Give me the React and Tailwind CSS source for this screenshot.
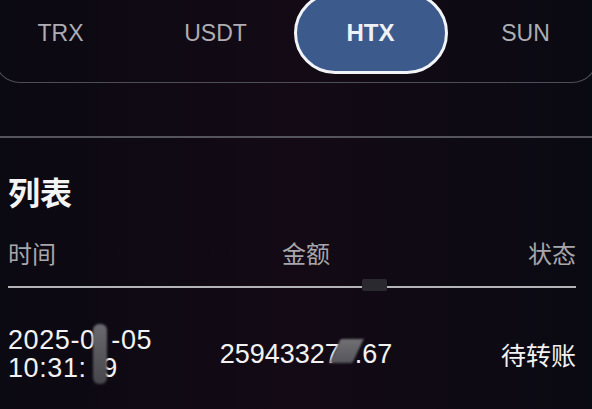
import React from "react";

const tabs = ["TRX", "USDT", "HTX", "SUN"];

const Hidden = ({ ch, className }) => (
  <span className="relative inline-block">
    <span className="text-transparent">{ch}</span>
    <span className={"absolute blur-[1px] " + className} />
  </span>
);

const App = () => {
  return (
    <div
      className="w-[592px] h-[409px] overflow-hidden bg-gradient-to-r from-[#0b0912] via-[#130a15] to-[#0a0a13] text-white"
      style={{ fontFamily: '"Liberation Sans", "Noto Sans CJK SC", sans-serif' }}
    >
      {/* tab card */}
      <div className="ml-[-6px] w-[604px] h-[103px] mt-[-20px] border border-t-0 border-[#4f4d57] rounded-b-[26px] flex items-center pt-[4px]">
        <div className="ml-[-12px] flex items-center">
          {tabs.map((t) => (
            <div key={t} className="w-[155px] flex justify-center shrink-0">
              {t === "HTX" ? (
                <div className="w-[154px] h-[82px] rounded-full bg-[#3c5a8b] border-[3px] border-[#f2f4f7] flex items-center justify-center text-[24px] font-bold text-[#eef2f7]">
                  {t}
                </div>
              ) : (
                <span className="text-[23px] text-[#aeadb3]">{t}</span>
              )}
            </div>
          ))}
        </div>
      </div>

      <div className="mt-[53px] h-[2px] bg-[#55535c]" />

      <div className="pl-[8px] pr-[16px]">
        <div className="mt-[37px] text-[32px] leading-none font-semibold text-[#f4f4f4]" style={{ fontFamily: '"Noto Sans CJK SC", sans-serif' }}>
          列表
        </div>

        <div
          className="mt-[34px] grid grid-cols-[178px_1fr_150px] text-[24px] leading-none text-[#a7a6aa]"
          style={{ fontFamily: '"Noto Sans CJK SC", sans-serif' }}
        >
          <span>时间</span>
          <span className="text-center">金额</span>
          <span className="text-right">状态</span>
        </div>

        <div className="relative mt-[21px] h-[2px] bg-[#b4b3b8]">
          <span className="absolute left-[354px] top-[-7px] w-[25px] h-[12px] bg-[#2a2930] rounded-[2px] blur-[0.5px]" />
        </div>

        <div className="mt-[38px] grid grid-cols-[178px_1fr_150px] items-center text-[27px] leading-[28px] text-[#f2f2f2]">
          <div className="tracking-[0.6px]">
            <div>
              2025-0
              <Hidden ch="1" className="left-[-3px] top-[-2px] w-[14px] h-[60px] rounded-[6px] bg-gradient-to-b from-[#6b6a70] via-[#58575c] to-[#47464c]" />
              -05
            </div>
            <div>
              10:31:
              <Hidden ch="2" className="left-0 top-0 w-0 h-0" />
              9
            </div>
          </div>
          <div className="text-center">
            25943327
            <Hidden ch="1" className="left-[-5px] top-[-1px] w-[23px] h-[24px] skew-x-[-25deg] bg-gradient-to-b from-[#707075] to-[#56555b]" />
            .67
          </div>
          <div className="text-right text-[25px]" style={{ fontFamily: '"Noto Sans CJK SC", sans-serif' }}>
            待转账
          </div>
        </div>
      </div>
    </div>
  );
};

export default App;
